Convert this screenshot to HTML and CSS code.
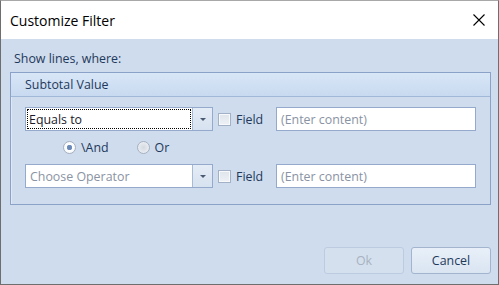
FILE: index.html
```html
<!DOCTYPE html>
<html lang="en">
<head>
  <meta charset="UTF-8">
  <title>Customize Filter</title>
  <link rel="stylesheet" href="styles.css">
</head>
<body>
  <div class="window">
    <div class="titlebar">
      <span class="title">Customize Filter</span>
      <button class="close" aria-label="Close">
        <svg width="12" height="12" viewBox="0 0 12 12">
          <path d="M0.5 0.5 L11.5 11.5 M11.5 0.5 L0.5 11.5" stroke="#000" stroke-width="1.1" fill="none"/>
        </svg>
      </button>
    </div>

    <div class="dialog-body">
      <div class="caption">Show lines, where:</div>

      <div class="group">
        <div class="group-header">Subtotal Value</div>
        <div class="group-content">
          <div class="cond-row">
            <div class="combo">
              <div class="combo-text"><span class="focused">Equals to</span></div>
              <div class="combo-button"><span class="arrow"></span></div>
            </div>
            <label class="check"><span class="check-box"></span>Field</label>
            <div class="text-input placeholder">(Enter content)</div>
          </div>

          <div class="logic-row">
            <label class="radio"><span class="radio-dot checked"></span>\And</label>
            <label class="radio"><span class="radio-dot"></span>Or</label>
          </div>

          <div class="cond-row">
            <div class="combo">
              <div class="combo-text placeholder">Choose Operator</div>
              <div class="combo-button"><span class="arrow"></span></div>
            </div>
            <label class="check"><span class="check-box"></span>Field</label>
            <div class="text-input placeholder">(Enter content)</div>
          </div>
        </div>
      </div>

      <div class="buttons">
        <button class="btn" disabled>Ok</button>
        <button class="btn">Cancel</button>
      </div>
    </div>
  </div>
</body>
</html>
```

FILE: styles.css
```css
:root {
  --body-bg: #cfdced;
  --text: #1e395b;
  --border: #8aa2c7;
  --input-border: #94a9cb;
  --placeholder: #8a93a3;
}

body {
  margin: 0;
  font-family: 'Open Sans', 'Noto Sans', sans-serif;
  font-size: 12.4px;
  color: var(--text);
}

.window {
  width: 499px;
  height: 285px;
  box-sizing: border-box;
  border: 1px solid #6e6e6e;
  border-top-color: #a8a8a8;
  display: flex;
  flex-direction: column;
}

.titlebar {
  height: 38px;
  flex: none;
  background: #fff;
  display: flex;
  align-items: center;
  padding: 0 12px 0 9px;
}

.title {
  font-size: 14px;
  color: #000;
  padding-top: 1px;
}

.close {
  margin-left: auto;
  width: 14px;
  height: 14px;
  padding: 0 1px;
  border: none;
  background: transparent;
  display: flex;
  align-items: center;
  justify-content: center;
}

.dialog-body {
  flex: 1;
  background: var(--body-bg);
  padding: 12px 7px 10px 9px;
  display: flex;
  flex-direction: column;
}

.caption {
  line-height: 16px;
  padding-left: 4px;
  margin-bottom: 5px;
}

.group {
  border: 1px solid var(--border);
  box-shadow: inset 1px 1px 0 rgba(255, 255, 255, 0.35);
}

.group-header {
  height: 23px;
  line-height: 23px;
  padding-left: 14px;
  background: linear-gradient(#d8e6f7, #c8daf0);
  border-bottom: 1px solid #a2b8d8;
}

.group-content {
  padding: 10px 14px 16px 14px;
}

.cond-row {
  display: flex;
  align-items: center;
  height: 24px;
}

.combo {
  width: 188px;
  height: 24px;
  box-sizing: border-box;
  border: 1px solid var(--input-border);
  display: flex;
  background: #fff;
}

.combo-text {
  flex: 1;
  display: flex;
  align-items: center;
  padding: 1px;
  color: #1a1a2a;
}

.combo-text.placeholder {
  color: var(--placeholder);
  padding-left: 4px;
}

.focused {
  flex: 1;
  align-self: stretch;
  display: flex;
  align-items: center;
  padding-left: 2px;
  outline: 1px dotted #000;
  outline-offset: -1px;
}

.combo-button {
  width: 19px;
  border-left: 1px solid #a9bad4;
  background: linear-gradient(#e4ecf6, #d7e2f0);
  display: flex;
  align-items: center;
  justify-content: center;
}

.arrow {
  width: 0;
  height: 0;
  border-left: 3px solid transparent;
  border-right: 3px solid transparent;
  border-top: 3px solid #4a5a72;
}

.check {
  display: flex;
  align-items: center;
  margin-left: 5px;
  width: 58px;
}

.check-box {
  width: 11px;
  height: 11px;
  border: 1px solid #a3b1c6;
  background: linear-gradient(#dfe5ec, #eef2f7);
  box-shadow: inset 0 0 0 1px #f7f9fb;
  margin-right: 5px;
}

.text-input {
  width: 200px;
  height: 24px;
  box-sizing: border-box;
  border: 1px solid var(--input-border);
  background: #fff;
  display: flex;
  align-items: center;
  padding-left: 4px;
  margin-left: auto;
}

.text-input.placeholder {
  color: var(--placeholder);
}

.logic-row {
  height: 33px;
  display: flex;
  align-items: center;
  padding-left: 38px;
  gap: 28px;
}

.radio {
  display: flex;
  align-items: center;
}

.radio-dot {
  width: 11px;
  height: 11px;
  border-radius: 50%;
  border: 1px solid #a5b0c0;
  background: radial-gradient(circle, #d4d9e0 0, #e9edf2 70%);
  margin-right: 5px;
}

.radio-dot.checked {
  background: radial-gradient(circle, #6584b3 0, #7391bf 2.5px, #ffffff 3px, #eef2f7 100%);
}

.buttons {
  margin-top: auto;
  display: flex;
  justify-content: flex-end;
  gap: 7px;
}

.btn {
  width: 80px;
  height: 27px;
  font-family: inherit;
  font-size: 12.4px;
  color: var(--text);
  border: 1px solid #a3b4cf;
  border-radius: 3px;
  background: linear-gradient(#e8eff8, #dae5f2);
}

.btn:disabled {
  color: #a8b2c0;
  border-color: #bccbe0;
  background: #d4e0ee;
}
```
